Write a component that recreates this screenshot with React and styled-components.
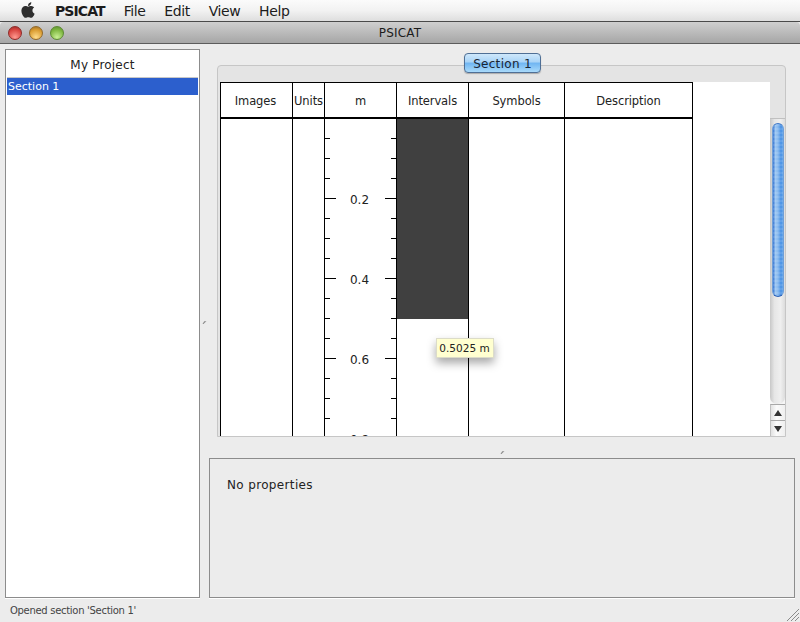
import React from 'react'
import styled, { createGlobalStyle } from 'styled-components'
import { FaApple } from 'react-icons/fa'

const FONT = `'DejaVu Sans', 'Liberation Sans', sans-serif`

const GlobalStyle = createGlobalStyle`
  html, body {
    margin: 0;
    padding: 0;
    background: #ececec;
  }
  * {
    box-sizing: border-box;
  }
`

const Screen = styled.div`
  width: 800px;
  height: 622px;
  overflow: hidden;
  display: flex;
  flex-direction: column;
  background: #ececec;
  font-family: ${FONT};
  color: #222;
`

const MenuBar = styled.div`
  height: 22px;
  flex: none;
  display: flex;
  align-items: center;
  padding-left: 20px;
  background: linear-gradient(#fbfbfb, #f2f2f2 50%, #dedede);
  border-bottom: 1px solid #4a4a4a;
  font-size: 14px;
  color: #1c1c1c;
`

const AppleMark = styled(FaApple)`
  width: 16px;
  height: 18px;
  color: #2e2e2e;
  margin-right: 19px;
  margin-top: -2px;
`

const MenuItem = styled.span`
  font-weight: ${props => (props.$bold ? 700 : 400)};
  margin-right: ${props => (props.$bold ? 19 : 18.8)}px;
  letter-spacing: ${props => (props.$bold ? '-0.9px' : '-0.4px')};
`

const TitleBar = styled.div`
  height: 22px;
  flex: none;
  position: relative;
  display: flex;
  align-items: center;
  justify-content: center;
  background: linear-gradient(#cfcfcf, #a6a6a6);
  border-bottom: 1px solid #5c5c5c;
  border-radius: 4px 4px 0 0;
  font-size: 12px;
  letter-spacing: 0.2px;
  color: #1c1c1c;
`

const Lights = styled.div`
  position: absolute;
  left: 8px;
  top: 4px;
  display: flex;
  gap: 7px;
`

const Light = styled.span`
  width: 14px;
  height: 14px;
  border-radius: 50%;
  border: 1px solid ${props => props.$edge};
  background: radial-gradient(circle at 50% 85%, ${props => props.$glow}, ${props => props.$base} 65%, ${props => props.$edge});
`

const Main = styled.div`
  flex: 1;
  min-height: 0;
  display: flex;
  padding: 5px 5px 0;
`

const ProjectPanel = styled.div`
  width: 195px;
  flex: none;
  display: flex;
  flex-direction: column;
  background: #fff;
  border: 1px solid #8c8c8c;
  box-shadow: 0 1px 0 #fff;
  padding: 0 1px;
`

const ProjectTitle = styled.div`
  height: 28px;
  flex: none;
  display: flex;
  align-items: flex-end;
  justify-content: center;
  padding-bottom: 5px;
  font-size: 12px;
  letter-spacing: 0.2px;
  color: #222;
  border-bottom: 1px solid #c8c8c8;
`

const TreeRow = styled.div`
  height: 17px;
  display: flex;
  align-items: center;
  padding-left: 1px;
  font-size: 11px;
  color: #fff;
  background: #2c5fcd;
`

const VerticalSplit = styled.div`
  width: 9px;
  flex: none;
  display: flex;
  align-items: center;
  justify-content: center;
  padding-bottom: 2px;
`

const Grip = styled.svg`
  width: 5px;
  height: 5px;
  display: block;
`

const RightColumn = styled.div`
  flex: 1;
  min-width: 0;
  display: flex;
  flex-direction: column;
`

const TabbedArea = styled.div`
  padding: 4px 9px 0 8px;
  flex: none;
  display: flex;
  flex-direction: column;
`

const TabRow = styled.div`
  height: 20px;
  margin-bottom: -8px;
  display: flex;
  justify-content: center;
  position: relative;
  z-index: 1;
  padding-left: 2px;
`

const Tab = styled.div`
  width: 77px;
  height: 20px;
  display: flex;
  align-items: center;
  justify-content: center;
  padding-top: 1px;
  font-size: 12px;
  letter-spacing: 0.3px;
  color: #1a2533;
  border: 1px solid #4f6f95;
  border-radius: 4px;
  background: linear-gradient(#cfe8fb, #a8d3f7 45%, #6fb5f2 50%, #a9dafa);
  box-shadow: 0 1px 1px rgba(0, 0, 0, 0.25);
`

const TabPane = styled.div`
  height: 372px;
  display: flex;
  padding: 16px 0 0 2px;
  background: #e4e4e4;
  border: 1px solid #c6c6c6;
  border-radius: 4px 4px 0 0;
`

const LogView = styled.div`
  flex: 1;
  min-width: 0;
  height: 100%;
  display: flex;
  position: relative;
  overflow: hidden;
  background: #fff;
`

const Column = styled.div`
  width: ${props => props.$width}px;
  flex: none;
  display: flex;
  flex-direction: column;
  border-right: 1px solid #000;
  ${props => props.$first && 'border-left: 1px solid #000;'}
`

const ColumnHead = styled.div`
  height: 37px;
  flex: none;
  display: flex;
  align-items: center;
  justify-content: center;
  padding: 1px ${props => (props.$first ? 2 : 0)}px 0 0;
  border-top: 1px solid #000;
  border-bottom: 2px solid #000;
  font-size: 11.5px;
  letter-spacing: -0.1px;
  color: #222;
  white-space: nowrap;
`

const ColumnBody = styled.div`
  flex: 1;
  position: relative;
`

const Ruler = styled.svg`
  position: absolute;
  left: 0;
  top: 0;
  width: 71px;
  height: 320px;
  display: block;
`

const DepthLabel = styled.span`
  position: absolute;
  left: -1px;
  width: 71px;
  text-align: center;
  top: ${props => props.$top}px;
  font-size: 12px;
  line-height: 14px;
  color: #222;
`

const IntervalFill = styled.div`
  height: ${props => props.$height}px;
  background: #404040;
`

const Tooltip = styled.div`
  position: absolute;
  left: 216px;
  top: 256px;
  width: 58px;
  height: 20px;
  display: flex;
  align-items: center;
  justify-content: center;
  padding-right: 1px;
  background: #ffffd0;
  border: 1px solid #dcdcc8;
  box-shadow: 0 5px 10px rgba(0, 0, 0, 0.35);
  font-size: 10.5px;
  color: #222;
  z-index: 2;
`

const ScrollBar = styled.div`
  width: 15px;
  flex: none;
  margin-top: 36px;
  display: flex;
  flex-direction: column;
  background: #f6f6f6;
  border-top: 1px solid #c0c0c0;
`

const ScrollTrack = styled.div`
  flex: 1;
  min-height: 0;
  padding: 4px 1px 0 2px;
  background: linear-gradient(90deg, #c8c8c8, #e6e6e6 30%, #efefef 70%, #dcdcdc);
  border-radius: 0 0 7px 7px;
`

const ScrollThumb = styled.div`
  height: 174px;
  border-radius: 7px 7px 7px 7px;
  border: 1px solid #6f9fd8;
  border-top-color: #3f78c8;
  border-bottom-color: #2c62b8;
  background:
    repeating-linear-gradient(rgba(255, 255, 255, 0.1) 0 2px, transparent 2px 4px),
    linear-gradient(90deg, #3474d2, #9cc6f2 25%, #86b8ee 50%, #4790e4 80%, #6aa8ea);
`

const ScrollButton = styled.div`
  height: 16px;
  flex: none;
  display: flex;
  align-items: center;
  justify-content: center;
  background: linear-gradient(90deg, #e2e2e2, #fbfbfb 40%, #efefef);
  border-top: 1px solid #a8a8a8;
  border-left: 1px solid #c0c0c0;
`

const Arrow = styled.span`
  width: 0;
  height: 0;
  border-left: 4px solid transparent;
  border-right: 4px solid transparent;
  ${props => (props.$down ? 'border-top: 6px solid #333;' : 'border-bottom: 6px solid #333;')}
`

const HorizontalSplit = styled.div`
  height: 21px;
  flex: none;
  display: flex;
  align-items: center;
  justify-content: center;
  padding-top: 9px;
`

const PropertiesPanel = styled.div`
  height: 140px;
  flex: none;
  padding: 19px 17px;
  background: #ececec;
  border: 1px solid #8c8c8c;
  box-shadow: 0 1px 0 #fff;
  font-size: 12px;
  letter-spacing: 0.35px;
  line-height: 15px;
  color: #222;
`

const StatusBar = styled.div`
  height: 24px;
  flex: none;
  position: relative;
  display: flex;
  align-items: center;
  padding: 0 0 0 10px;
  font-size: 10px;
  letter-spacing: -0.3px;
  color: #444;
`

const ResizeGrip = styled.svg`
  position: absolute;
  right: 1px;
  bottom: 1px;
  width: 12px;
  height: 12px;
`

const columns = [
  { title: 'Images', width: 73, first: true },
  { title: 'Units', width: 32 },
  { title: 'm', width: 72, ruler: true },
  { title: 'Intervals', width: 72, fill: 200 },
  { title: 'Symbols', width: 96 },
  { title: 'Description', width: 128 },
]

const ticks = Array.from({ length: 16 }, (_, i) => 20 * (i + 1))
const labels = [
  { text: '0.2', y: 80 },
  { text: '0.4', y: 160 },
  { text: '0.6', y: 240 },
  { text: '0.8', y: 320 },
]

const DepthRuler = () => (
  <>
    <Ruler viewBox="0 0 71 320">
      {ticks.map(y => {
        const len = y % 80 === 0 ? 11 : 5
        return (
          <g key={y} stroke="#000" strokeWidth="1" shapeRendering="crispEdges">
            <line x1="0" x2={len} y1={y - 0.5} y2={y - 0.5} />
            <line x1={71 - len} x2="71" y1={y - 0.5} y2={y - 0.5} />
          </g>
        )
      })}
    </Ruler>
    {labels.map(l => (
      <DepthLabel key={l.text} $top={l.y - 6}>{l.text}</DepthLabel>
    ))}
  </>
)

const HandleDot = () => (
  <Grip viewBox="0 0 5 5">
    <path d="M0.5 4 L2.2 1.2 L4.5 1.2 L3 2.6 L1.5 4 Z" fill="#8a8a8a" />
  </Grip>
)

export default function App() {
  return (
    <Screen>
      <GlobalStyle />
      <MenuBar>
        <AppleMark />
        <MenuItem $bold>PSICAT</MenuItem>
        <MenuItem>File</MenuItem>
        <MenuItem>Edit</MenuItem>
        <MenuItem>View</MenuItem>
        <MenuItem>Help</MenuItem>
      </MenuBar>
      <TitleBar>
        <Lights>
          <Light $base="#d8443f" $glow="#ff9a90" $edge="#8e2a28" />
          <Light $base="#d99a2e" $glow="#ffdc8a" $edge="#92692a" />
          <Light $base="#7cb53e" $glow="#c9f095" $edge="#5c8a33" />
        </Lights>
        PSICAT
      </TitleBar>
      <Main>
        <ProjectPanel>
          <ProjectTitle>My Project</ProjectTitle>
          <TreeRow>Section 1</TreeRow>
        </ProjectPanel>
        <VerticalSplit>
          <HandleDot />
        </VerticalSplit>
        <RightColumn>
          <TabbedArea>
            <TabRow>
              <Tab>Section 1</Tab>
            </TabRow>
            <TabPane>
              <LogView>
                {columns.map(col => (
                  <Column key={col.title} $width={col.width} $first={col.first}>
                    <ColumnHead $first={col.first}>{col.title}</ColumnHead>
                    <ColumnBody>
                      {col.ruler && <DepthRuler />}
                      {col.fill && <IntervalFill $height={col.fill} />}
                    </ColumnBody>
                  </Column>
                ))}
                <Tooltip>0.5025 m</Tooltip>
              </LogView>
              <ScrollBar>
                <ScrollTrack>
                  <ScrollThumb />
                </ScrollTrack>
                <ScrollButton><Arrow /></ScrollButton>
                <ScrollButton><Arrow $down /></ScrollButton>
              </ScrollBar>
            </TabPane>
          </TabbedArea>
          <HorizontalSplit>
            <HandleDot />
          </HorizontalSplit>
          <PropertiesPanel>No properties</PropertiesPanel>
        </RightColumn>
      </Main>
      <StatusBar>
        Opened section 'Section 1'
        <ResizeGrip viewBox="0 0 12 12">
          <path d="M0 12 L12 0 M4 12 L12 4 M8 12 L12 8" stroke="#8a8a8a" strokeWidth="1" />
        </ResizeGrip>
      </StatusBar>
    </Screen>
  )
}
